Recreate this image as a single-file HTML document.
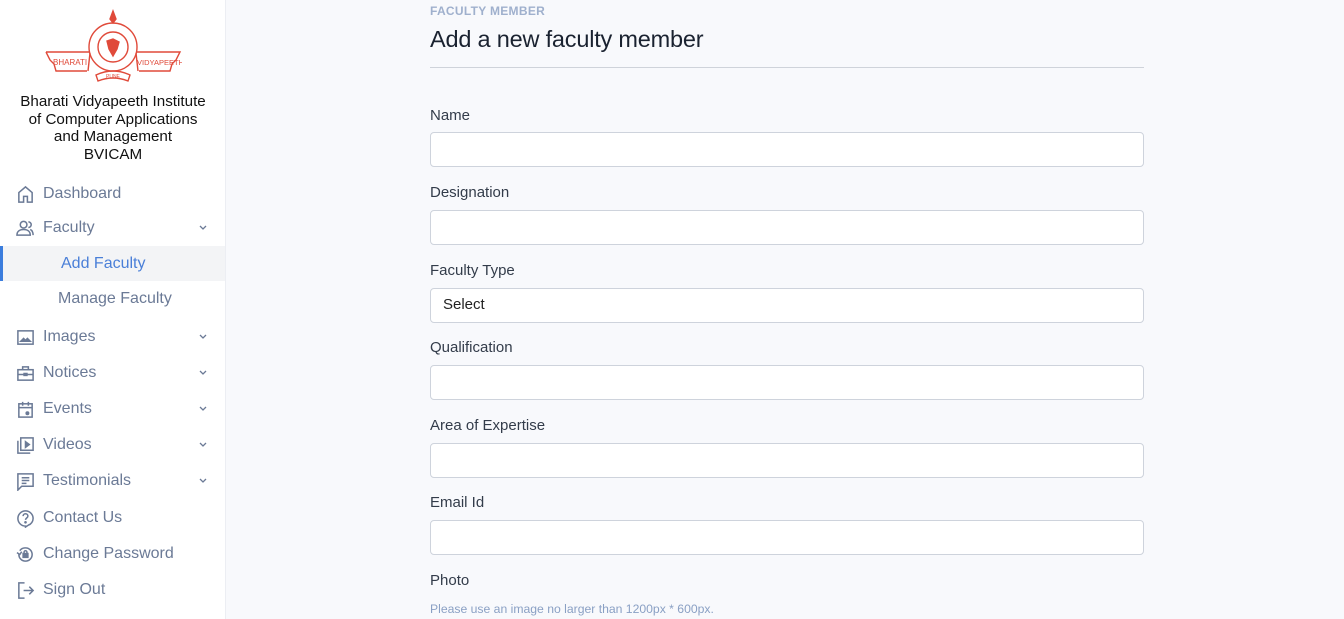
<!DOCTYPE html>
<html><head><style>
*{box-sizing:border-box;margin:0;padding:0}
body{width:1344px;height:619px;overflow:hidden;background:#f8f9fc;font-family:"Liberation Sans",sans-serif;position:relative}
.side{position:absolute;left:0;top:0;width:226px;height:619px;background:#fff;border-right:1px solid #eceef3}
.org{position:absolute;top:93px;left:0;width:226px;text-align:center;font-size:15.2px;line-height:17.5px;color:#111}
.it{position:absolute;left:0;width:225px;height:34px;display:flex;align-items:center;font-size:16px;color:#6b7a96}
.it svg{position:absolute;left:16px;width:19px;height:19px;fill:none;stroke:#6b7a96;stroke-width:1.6}
.it span{position:absolute;left:43px}
.it .ch{position:absolute;left:198px;width:10px;height:10px;stroke-width:1.3}
.sub span{left:58px}
.act{background:#f3f4f6;border-left:3px solid #3b7ddd}
.act span{left:58px;color:#4a7fd8}
.main{position:absolute;left:430px;top:0;width:714px}
.eyebrow{position:absolute;top:4px;font-size:12px;font-weight:bold;color:#9fb0cd;letter-spacing:.3px}
h1{position:absolute;top:26px;font-weight:normal;font-size:23.5px;color:#1a2230;white-space:nowrap;letter-spacing:-.2px}
.hr{position:absolute;top:67px;width:714px;height:1px;background:#cfd3da}
.lb{position:absolute;font-size:15px;color:#333c4a}
.in{position:absolute;width:714px;height:35px;background:#fff;border:1px solid #ced3dc;border-radius:4px;font-size:15px;color:#222;padding:7px 12px}
.hint{position:absolute;top:602px;font-size:12.2px;color:#8aa0c4}
</style></head><body>
<div class="side">
<svg style="position:absolute;left:44px;top:9px" width="138" height="78" viewBox="0 0 138 78" fill="none" stroke="#e04a3a" stroke-width="1.4">
<path d="M2 43 H45 M93 43 H136 L132 51 L128 55 L126 62 H95 M2 43 L6 51 L10 55 L12 62 H43"/>
<path d="M46 44 L44 62 M92 44 L94 62"/>
<circle cx="69" cy="38" r="24"/><circle cx="69" cy="38" r="15"/>
<path d="M69 2 L66 10 L69 14 L72 10 Z" fill="#e04a3a"/>
<path d="M63 32 L69 30 L75 33 L73 40 L69 47 L65 40 Z" fill="#e04a3a"/>
<path d="M52 66 Q69 58 86 66 L84 72 Q69 66 54 72 Z"/>
<text x="9" y="56" font-size="8" fill="#e04a3a" stroke="none" font-family="Liberation Sans">BHARATI</text>
<text x="93" y="56" font-size="7.5" fill="#e04a3a" stroke="none" font-family="Liberation Sans">VIDYAPEETH</text>
<text x="62" y="69" font-size="5" fill="#e04a3a" stroke="none" font-family="Liberation Sans">PUNE</text>
</svg>
<div class="org">Bharati Vidyapeeth Institute<br>of Computer Applications<br>and Management<br>BVICAM</div>

<div class="it" style="top:177px"><svg viewBox="0 0 20 20"><path d="M3 18V8l7-6 7 6v10H12v-6H8v6z"/></svg><span>Dashboard</span></div>
<div class="it" style="top:211px"><svg viewBox="0 0 20 20"><circle cx="8" cy="6" r="3.5"/><path d="M1 17c0-4 3-6 7-6s7 2 7 6z"/><path d="M13 3a3 3 0 010 6M15 11c2 1 3 3 3 6"/></svg><span>Faculty</span><svg class="ch" viewBox="0 0 10 10"><path d="M2 3l3 3 3-3"/></svg></div>
<div class="it act" style="top:246px;height:35px"><span>Add Faculty</span></div>
<div class="it sub" style="top:282px"><span>Manage Faculty</span></div>
<div class="it" style="top:320px"><svg viewBox="0 0 20 20"><rect x="2" y="3" width="16" height="14"/><path d="M5 14l3-3 2 2 2-2 3 3z" fill="#6b7a96"/></svg><span>Images</span><svg class="ch" viewBox="0 0 10 10"><path d="M2 3l3 3 3-3"/></svg></div>
<div class="it" style="top:356px"><svg viewBox="0 0 20 20"><rect x="2" y="6" width="16" height="11"/><path d="M7 6V3h6v3M2 11h16"/><rect x="8.5" y="10" width="3" height="2"/></svg><span>Notices</span><svg class="ch" viewBox="0 0 10 10"><path d="M2 3l3 3 3-3"/></svg></div>
<div class="it" style="top:392px"><svg viewBox="0 0 20 20"><rect x="3" y="4" width="14" height="14"/><path d="M3 8h14M7 2v4M13 2v4"/><circle cx="12" cy="14" r="1.3" fill="#6b7a96"/></svg><span>Events</span><svg class="ch" viewBox="0 0 10 10"><path d="M2 3l3 3 3-3"/></svg></div>
<div class="it" style="top:428px"><svg viewBox="0 0 20 20"><rect x="5" y="2" width="13" height="13"/><path d="M2 5v13h13"/><path d="M10 6l4 3-4 3z" fill="#6b7a96"/></svg><span>Videos</span><svg class="ch" viewBox="0 0 10 10"><path d="M2 3l3 3 3-3"/></svg></div>
<div class="it" style="top:464px"><svg viewBox="0 0 20 20"><path d="M2 2h16v13H6l-4 4z"/><path d="M6 6h8M6 9h8M6 12h5"/></svg><span>Testimonials</span><svg class="ch" viewBox="0 0 10 10"><path d="M2 3l3 3 3-3"/></svg></div>
<div class="it" style="top:501px"><svg viewBox="0 0 20 20"><path d="M10 18a8 8 0 118-8c0 3-2 6-5 7l-3 2z"/><path d="M7.5 7.5a2.5 2.5 0 115 0c0 2-2.5 2-2.5 4"/><circle cx="10" cy="14" r=".6" fill="#6b7a96"/></svg><span>Contact Us</span></div>
<div class="it" style="top:537px"><svg viewBox="0 0 20 20"><path d="M3 10a7 7 0 107-7 7 7 0 00-6 3"/><path d="M1 8l3 2 2-3"/><rect x="7.5" y="9" width="5" height="4" fill="#6b7a96"/><path d="M8.5 9V7.5a1.5 1.5 0 013 0V9"/></svg><span>Change Password</span></div>
<div class="it" style="top:573px"><svg viewBox="0 0 20 20"><path d="M9 2H3v16h6M8 10h10M14 6l4 4-4 4"/></svg><span>Sign Out</span></div>
</div>

<div class="main">
<div class="eyebrow">FACULTY MEMBER</div>
<h1>Add a new faculty member</h1>
<div class="hr"></div>
<div class="lb" style="top:107px">Name</div><div class="in" style="top:132px"></div>
<div class="lb" style="top:184px">Designation</div><div class="in" style="top:210px"></div>
<div class="lb" style="top:262px">Faculty Type</div><div class="in" style="top:288px">Select</div>
<div class="lb" style="top:339px">Qualification</div><div class="in" style="top:365px"></div>
<div class="lb" style="top:417px">Area of Expertise</div><div class="in" style="top:443px"></div>
<div class="lb" style="top:494px">Email Id</div><div class="in" style="top:520px"></div>
<div class="lb" style="top:572px">Photo</div>
<div class="hint">Please use an image no larger than 1200px * 600px.</div>
</div>
</body></html>
